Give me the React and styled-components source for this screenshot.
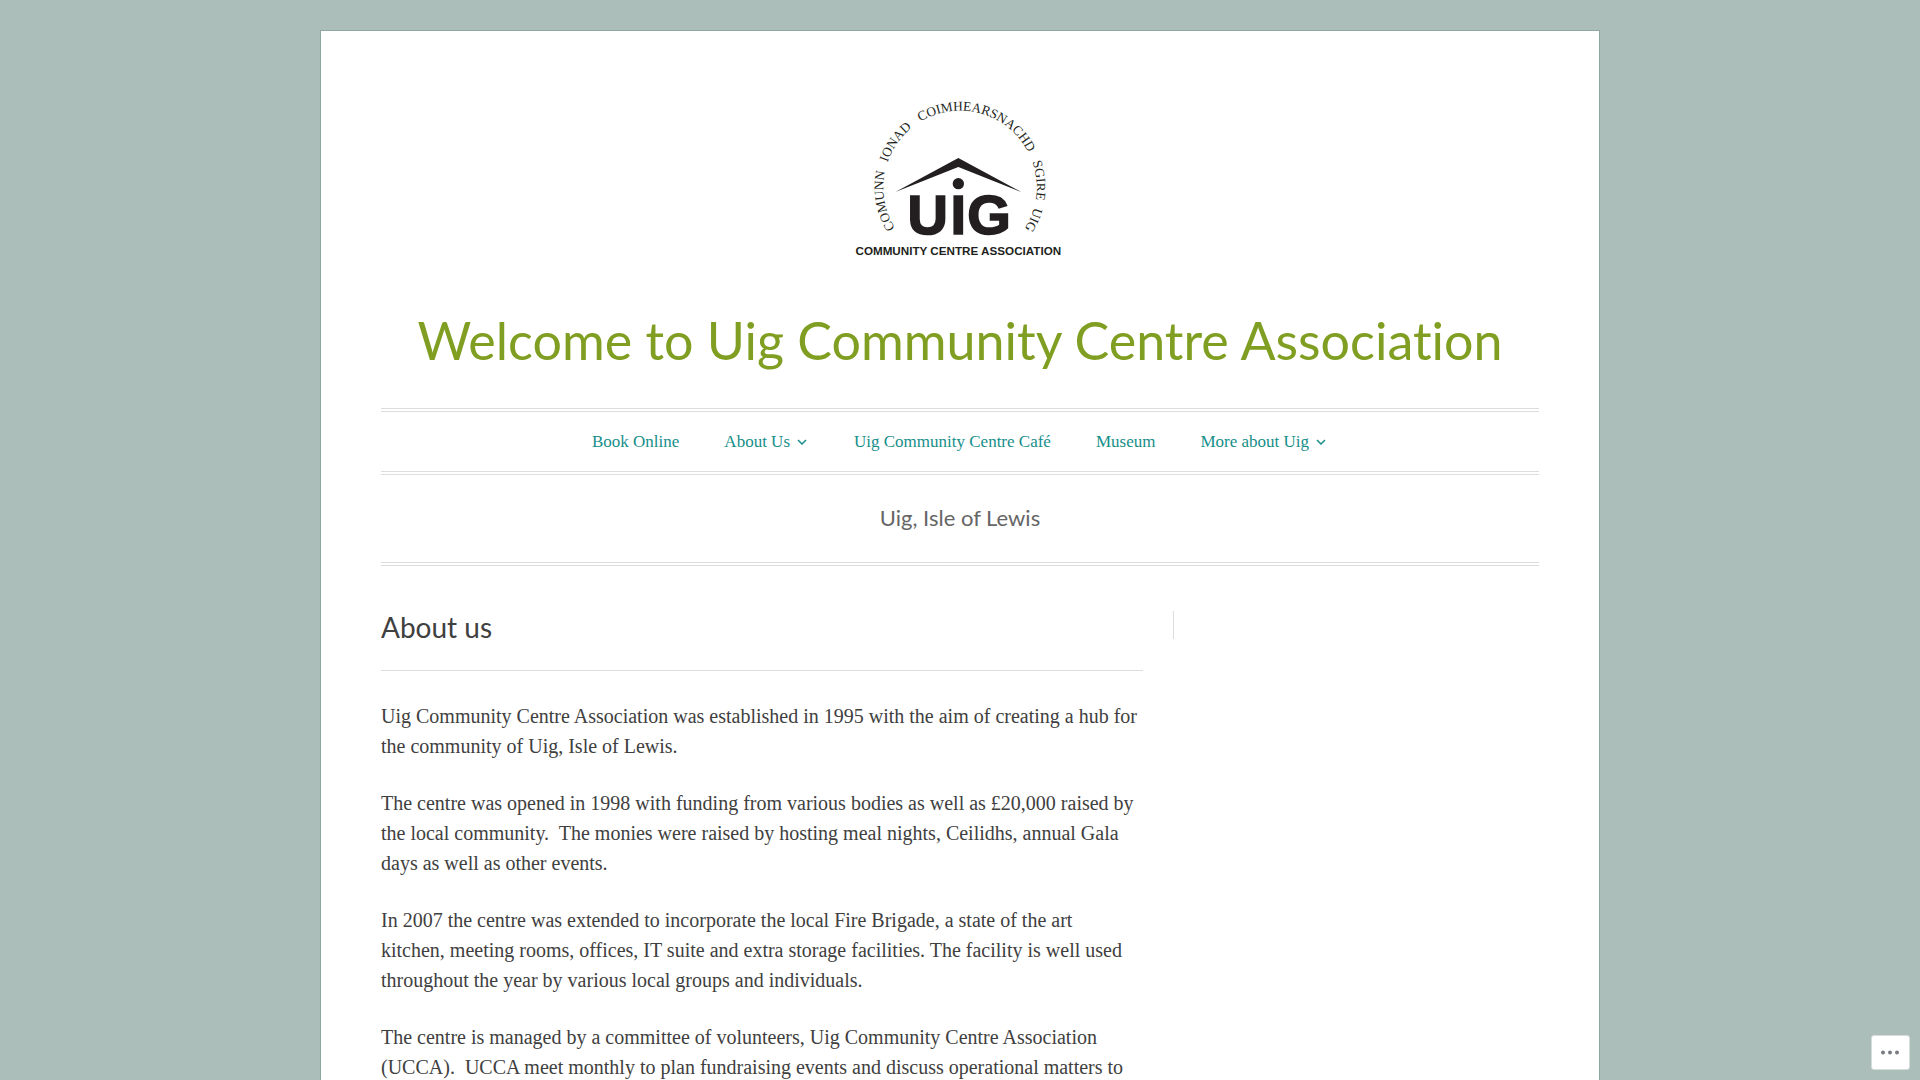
import React from 'react';
import styled, { createGlobalStyle } from 'styled-components';

const colors = {
  background: '#abbeba',
  frame: '#8ca8a1',
  title: '#809f22',
  link: '#168e8a',
  text: '#404040',
  muted: '#666666',
  line: '#dddddd',
};

const serif = "'Liberation Serif', serif";

const menu = [
  { label: 'Book Online' },
  { label: 'About Us', dropdown: true },
  { label: 'Uig Community Centre Café' },
  { label: 'Museum' },
  { label: 'More about Uig', dropdown: true },
];

const paragraphs = [
  'Uig Community Centre Association was established in 1995 with the aim of creating a hub for the community of Uig, Isle of Lewis.',
  'The centre was opened in 1998 with funding from various bodies as well as £20,000 raised by the local community.\u00a0 The monies were raised by hosting meal nights, Ceilidhs, annual Gala days as well as other events.',
  'In 2007 the centre was extended to incorporate the local Fire Brigade, a state of the art kitchen,\u00a0meeting rooms, offices, IT suite and extra storage facilities. The facility is well used throughout the year by various local groups and individuals.',
  'The centre is managed by a committee of volunteers, Uig Community Centre Association (UCCA).\u00a0 UCCA meet monthly to plan fundraising events and discuss operational matters to',
];

// middle of each word, in degrees clockwise from the bottom of the ring
const ring = [
  { word: 'COMUNN', angle: 80 },
  { word: 'IONAD', angle: 125 },
  { word: 'COIMHEARSNACHD', angle: 196 },
  { word: 'SGIRE', angle: 265 },
  { word: 'UIG', angle: 294 },
];

const Logo = () => (
  <LogoSvg viewBox="0 0 720 540" role="img" aria-label="Uig Community Centre Association">
    <defs>
      <path id="ring" d="M360 522 A230 230 0 0 1 360 62 A230 230 0 0 1 360 522" />
    </defs>
    <RingText>
      {ring.map(({ word, angle }) => (
        <text key={word}>
          <textPath href="#ring" startOffset={`${(angle / 360) * 100}%`}>{word}</textPath>
        </text>
      ))}
    </RingText>
    <path d="M166 306 L355 204 L544 306 L355 231 Z" />
    <circle cx="355" cy="281" r="17" />
    <BigText>
      <text x="263" y="431">U</text>
      <text x="355" y="431">I</text>
      <text x="447" y="431">G</text>
    </BigText>
    <BaseText x="355" y="494">COMMUNITY CENTRE ASSOCIATION</BaseText>
  </LogoSvg>
);

const Chevron = () => (
  <ChevronSvg viewBox="0 0 10 6" aria-hidden="true">
    <path d="M1 1 L5 5 L9 1" />
  </ChevronSvg>
);

const App = () => {
  return (
    <>
      <GlobalStyles />
      <Page>
        <Header>
          <LogoLink href="#">
            <Logo />
          </LogoLink>
          <SiteTitle>
            <a href="#">Welcome to Uig Community Centre Association</a>
          </SiteTitle>
          <Nav>
            <NavMenu>
              {menu.map(({ label, dropdown }) => (
                <li key={label}>
                  <NavLink href="#">
                    {label}
                    {dropdown && <Chevron />}
                  </NavLink>
                </li>
              ))}
            </NavMenu>
          </Nav>
          <Tagline>Uig, Isle of Lewis</Tagline>
        </Header>
        <Content>
          <main>
            <EntryTitle>About us</EntryTitle>
            {paragraphs.map((text) => (
              <Paragraph key={text}>{text}</Paragraph>
            ))}
          </main>
          <Sidebar />
        </Content>
      </Page>
      <MoreButton type="button" aria-label="More">
        <svg width="19" height="5" viewBox="0 0 19 5">
          <circle cx="2" cy="2.5" r="2" />
          <circle cx="9" cy="2.5" r="2" />
          <circle cx="16" cy="2.5" r="2" />
        </svg>
      </MoreButton>
    </>
  );
};

export default App;

const GlobalStyles = createGlobalStyle`
  * {
    box-sizing: border-box;
  }
  html {
    overflow-x: hidden;
    scrollbar-width: none;
  }
  body {
    margin: 0;
    background: ${colors.background};
    color: ${colors.text};
    font-family: ${serif};
    font-size: 20px;
    line-height: 30px;
  }
  a {
    color: inherit;
    text-decoration: none;
  }
`;

const Page = styled.div`
  max-width: 1280px;
  margin: 30px auto;
  padding: 59px 60px;
  background: #fff;
  border: 1px solid ${colors.frame};
`;

const Header = styled.header`
  display: flex;
  flex-direction: column;
  text-align: center;
`;

const LogoLink = styled.a`
  align-self: center;
  display: block;
`;

const LogoSvg = styled.svg`
  display: block;
  width: 240px;
  height: 180px;
  fill: #231f20;
`;

const RingText = styled.g`
  font-family: 'Liberation Serif', serif;
  font-size: 40px;
  text-anchor: middle;
`;

const BigText = styled.g`
  font-family: 'Liberation Sans', sans-serif;
  font-size: 168px;
  font-weight: bold;
  text-anchor: middle;
  stroke: #231f20;
  stroke-width: 5px;
`;

const BaseText = styled.text`
  font-family: 'Liberation Sans', sans-serif;
  font-size: 35px;
  font-weight: bold;
  text-anchor: middle;
`;

const SiteTitle = styled.h1`
  margin: 38px 0 36px;
  color: ${colors.title};
  font-family: Lato, sans-serif;
  font-size: 52px;
  font-weight: 400;
  font-variant-ligatures: none;
  line-height: 64px;
`;

const Nav = styled.nav`
  padding: 15px 0 14px;
  border-top: 4px double ${colors.line};
  border-bottom: 4px double ${colors.line};
`;

const NavMenu = styled.ul`
  display: flex;
  flex-wrap: wrap;
  justify-content: center;
  gap: 0 45px;
  margin: 0;
  padding: 0;
  list-style: none;
`;

const NavLink = styled.a`
  display: flex;
  align-items: center;
  gap: 7px;
  color: ${colors.link};
  font-size: 17px;
  &:hover {
    color: ${colors.text};
  }
`;

const ChevronSvg = styled.svg`
  width: 10px;
  height: 6px;
  margin-right: 2px;
  fill: none;
  stroke: currentColor;
  stroke-width: 1.5;
`;

const Tagline = styled.p`
  margin: 0;
  padding: 28px 0 29px;
  border-bottom: 4px double ${colors.line};
  color: ${colors.muted};
  font-family: Lato, sans-serif;
  font-size: 22px;
`;

const Content = styled.div`
  display: grid;
  grid-template-columns: minmax(0, 1fr) 366px;
  gap: 30px;
  padding-top: 45px;
`;

const EntryTitle = styled.h2`
  margin: 0 0 30px;
  padding-bottom: 26px;
  border-bottom: 1px solid ${colors.line};
  font-family: Lato, sans-serif;
  font-size: 28px;
  font-weight: 400;
  line-height: 33px;
`;

const Paragraph = styled.p`
  margin: 0 0 27px;
`;

const Sidebar = styled.aside`
  height: 28px;
  border-left: 1px solid ${colors.line};
`;

const MoreButton = styled.button`
  position: fixed;
  right: 10px;
  bottom: 10px;
  display: flex;
  align-items: center;
  justify-content: center;
  width: 39px;
  height: 35px;
  padding: 0;
  background: #fff;
  border: 1px solid #d5dcda;
  border-radius: 3px;
  fill: #787c82;
  cursor: pointer;
`;
